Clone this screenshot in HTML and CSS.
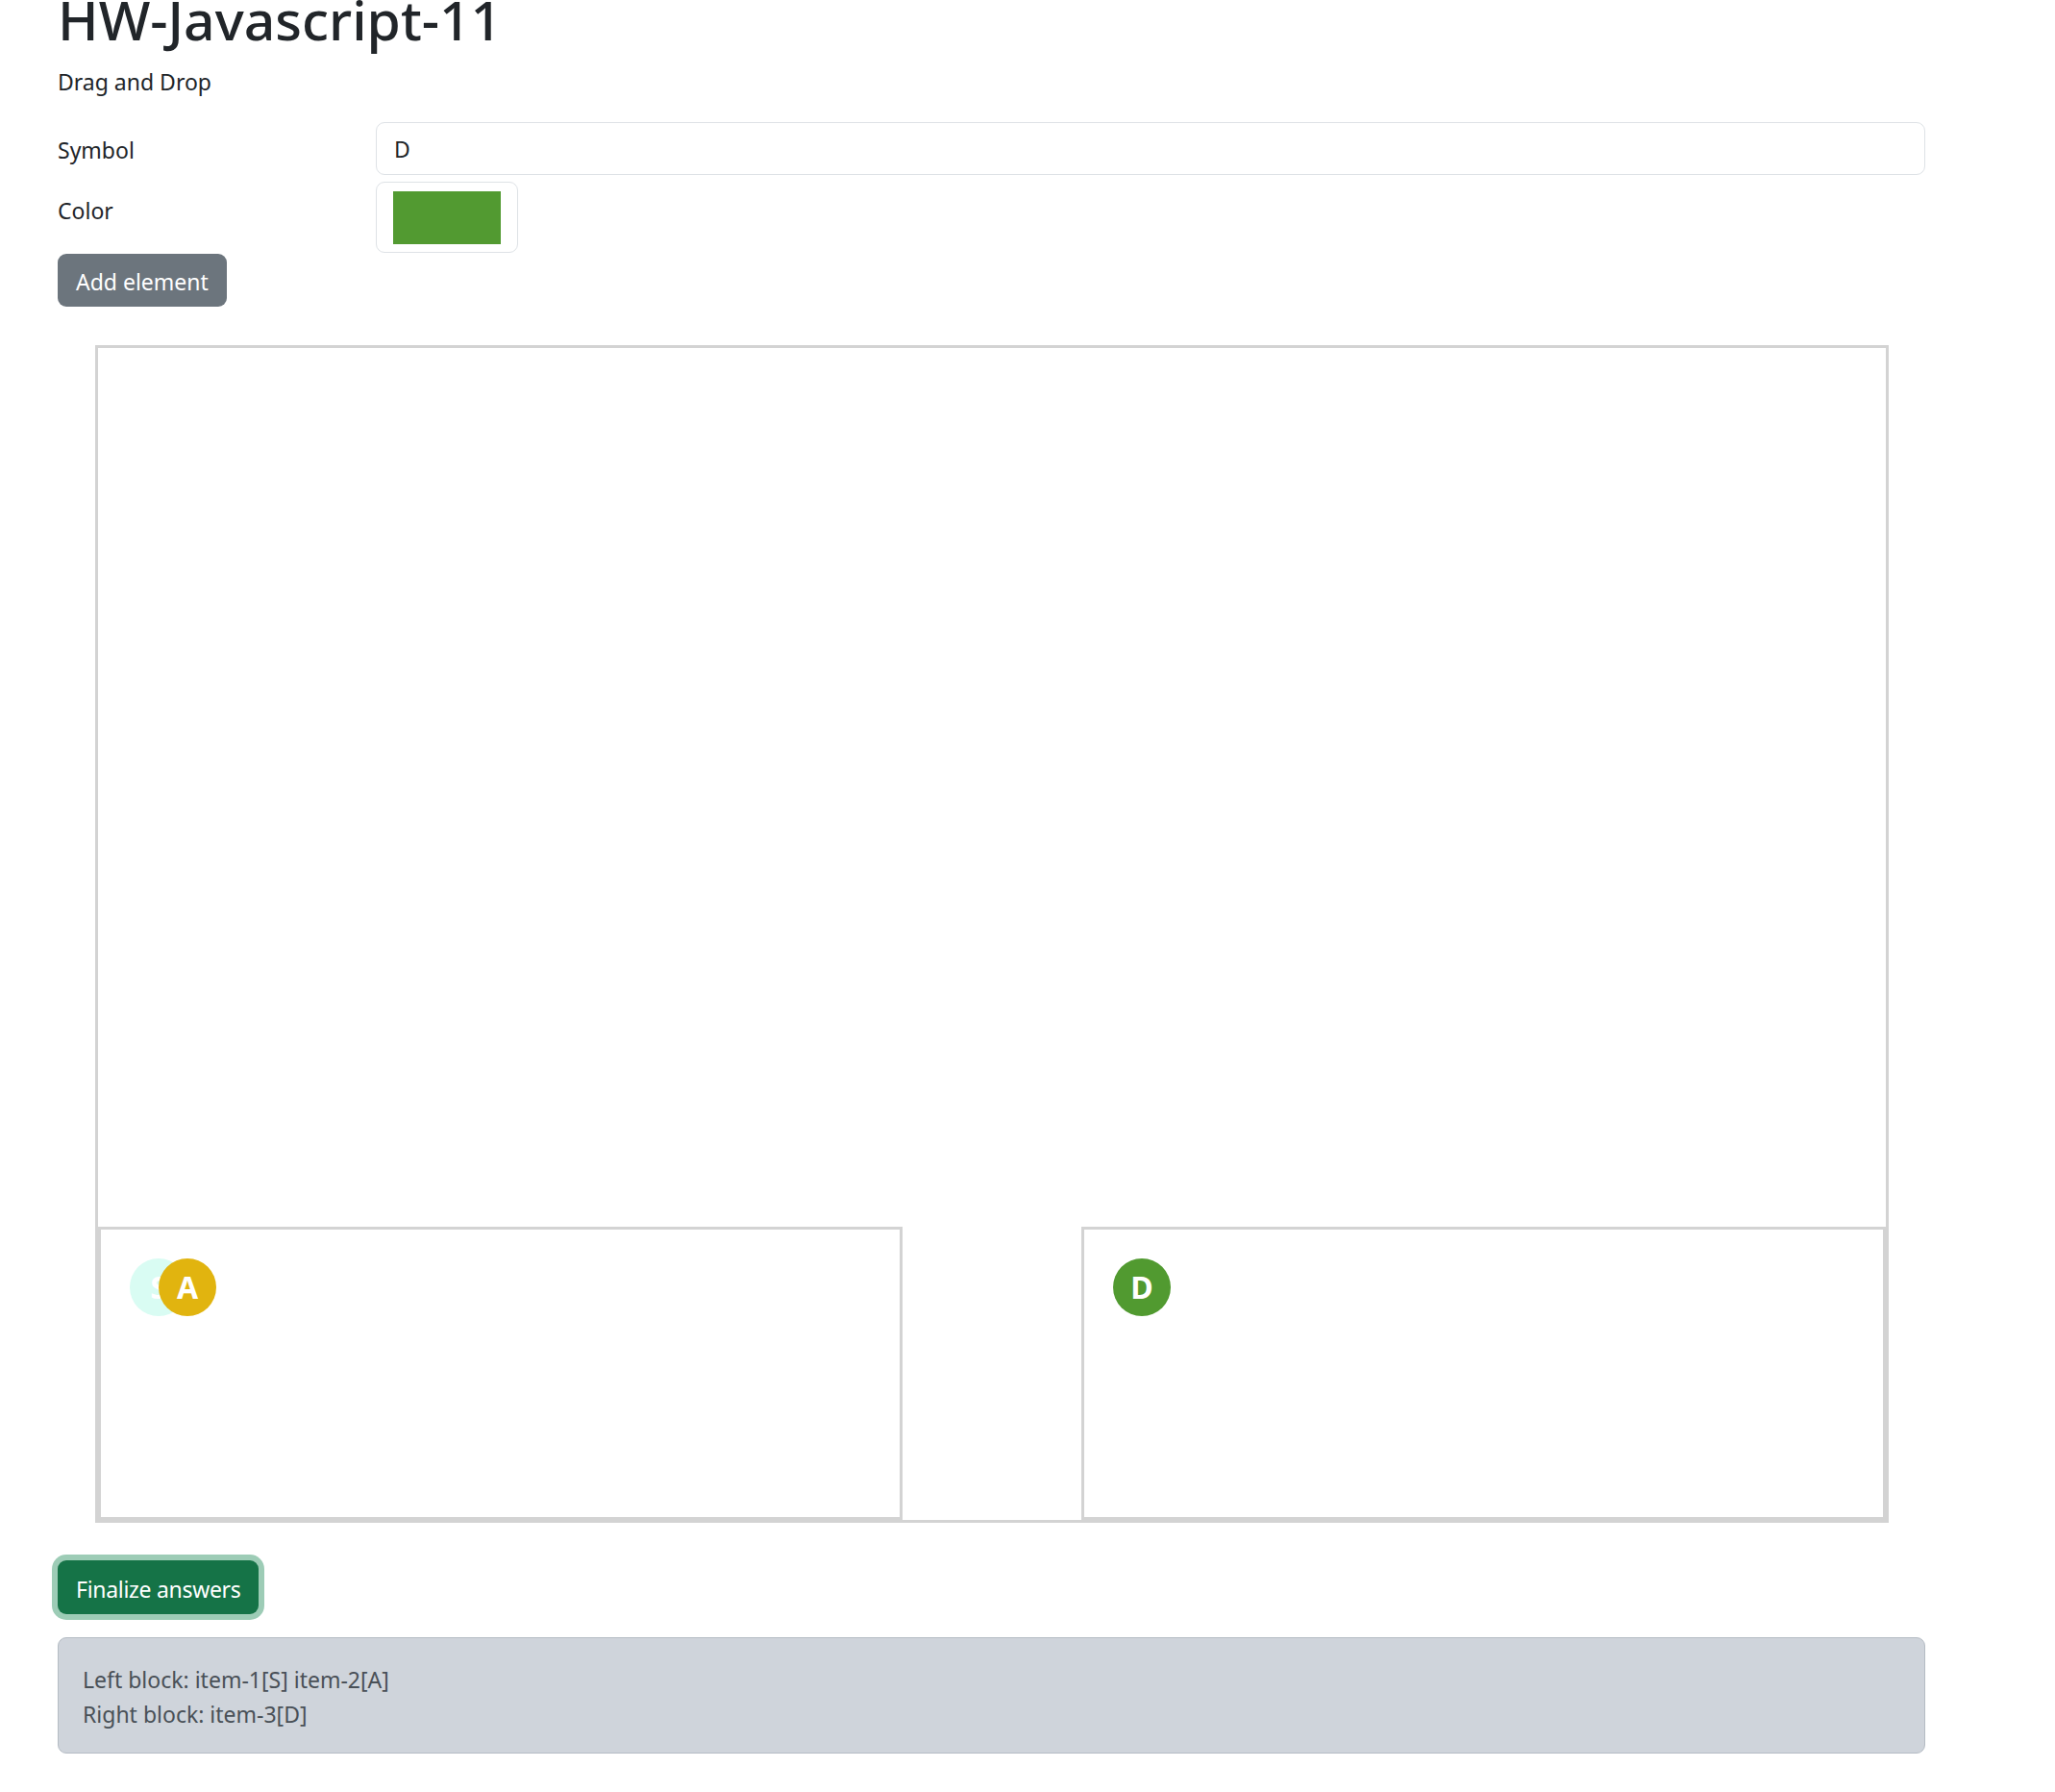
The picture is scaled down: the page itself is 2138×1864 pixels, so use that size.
FILE: index.html
```html
<!DOCTYPE html>
<html lang="en">
<head>
<meta charset="utf-8">
<title>HW-Javascript-11</title>
<link rel="stylesheet" href="styles.css">
</head>
<body>
<div class="container">
  <h1 class="title">HW-Javascript-11</h1>
  <p class="subtitle">Drag and Drop</p>

  <div class="form-row form-row-text">
    <label class="form-label" for="symbol">Symbol</label>
    <input class="text-input" id="symbol" type="text" value="D">
  </div>
  <div class="form-row form-row-color">
    <label class="form-label">Color</label>
    <div class="color-input"><span class="swatch"></span></div>
  </div>
  <button class="btn btn-add" type="button">Add element</button>

  <div class="field">
    <div class="zone">
      <div class="item item-s">S</div>
      <div class="item item-a item-overlap">A</div>
    </div>
    <div class="zone">
      <div class="item item-d">D</div>
    </div>
  </div>

  <button class="btn btn-finalize" type="button">Finalize answers</button>

  <div class="result">
    <div class="result-line">Left block: item-1[S] item-2[A]</div>
    <div class="result-line">Right block: item-3[D]</div>
  </div>
</div>
</body>
</html>
```

FILE: styles.css
```css
* { box-sizing: border-box; }

html, body {
  margin: 0;
  padding: 0;
  background: #ffffff;
}

body {
  font-family: "Noto Sans", "Open Sans", sans-serif;
  font-size: 23px;
  line-height: 36px;
  color: #212529;
}

.container {
  width: 2003px;
  padding-left: 60px;
}

.title {
  margin: -16px 0 11px 0;
  font-size: 57px;
  line-height: 72px;
  font-weight: 500;
  color: #212529;
}

.subtitle {
  margin: 0 0 24px 0;
}

.form-row {
  display: grid;
  grid-template-columns: 331px 1fr;
  align-items: start;
}

.form-row-text { margin-bottom: 7px; }

.form-label {
  padding-top: 11px;
}

.form-row-color .form-label { padding-top: 12px; }

.text-input {
  display: block;
  width: 100%;
  height: 55px;
  margin: 0;
  padding: 0 18px;
  font-family: inherit;
  font-size: 23px;
  color: #212529;
  background: #fff;
  border: 1.5px solid #dee2e6;
  border-radius: 9px;
  outline: none;
}

.color-input {
  width: 148px;
  height: 74px;
  padding: 9px 17px;
  border: 1.5px solid #dee2e6;
  border-radius: 9px;
  background: #fff;
}

.swatch {
  display: block;
  width: 112px;
  height: 55px;
  background: #529a31;
}

.btn {
  display: block;
  font-family: inherit;
  font-size: 23px;
  line-height: 36px;
  color: #ffffff;
  border: none;
  border-radius: 9px;
  padding: 11px 19px 8px 19px;
  white-space: nowrap;
  cursor: pointer;
}

.btn-add {
  margin-top: 1px;
  width: 176px;
  height: 55px;
  background: #6c757d;
  text-align: left;
}

.field {
  margin: 40px 0 0 39px;
  width: 1866px;
  height: 1225px;
  border: 3px solid #d3d3d3;
  display: flex;
  justify-content: space-between;
  align-items: flex-end;
}

.zone {
  width: 837px;
  height: 305px;
  border: 3px solid #d3d3d3;
  padding: 30px;
  display: flex;
  align-items: flex-start;
}

.item {
  width: 60px;
  height: 60px;
  border-radius: 50%;
  display: flex;
  align-items: center;
  justify-content: center;
  color: #ffffff;
  font-weight: 700;
  font-size: 32px;
  line-height: 1;
}

.item-overlap { margin-left: -30px; }

.item-s { background: #d9fcf3; }
.item-a { background: #e1b40f; }
.item-d { background: #519a30; }

.btn-finalize {
  margin-top: 39px;
  width: 209px;
  height: 56px;
  background: #157347;
  box-shadow: 0 0 0 6px #9dccb6;
  text-align: left;
  letter-spacing: -0.3px;
}

.result {
  margin-top: 24px;
  width: 1943px;
  height: 121px;
  padding: 25px 25px 22px 25px;
  background: #cfd4db;
  border: 1px solid #b5bcc4;
  border-radius: 9px;
  color: #495057;
}
```
